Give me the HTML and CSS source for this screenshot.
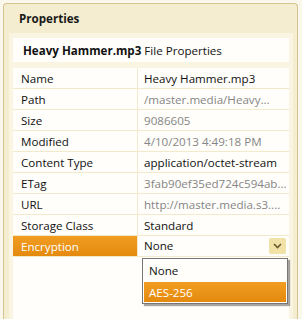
FILE: index.html
```html
<!DOCTYPE html>
<html lang="en">
<head>
    <meta charset="UTF-8">
    <title>Properties</title>
    <link rel="stylesheet" href="styles.css">
</head>
<body>
    <div class="panel">
        <div class="panel-title">Properties</div>
        <div class="panel-body">
            <div class="file-title"><b>Heavy Hammer.mp3</b>&nbsp;File Properties</div>
            <div class="props">
                <div class="row"><div class="key">Name</div><div class="val">Heavy Hammer.mp3</div></div>
                <div class="row"><div class="key">Path</div><div class="val dim">/master.media/Heavy...</div></div>
                <div class="row"><div class="key">Size</div><div class="val dim">9086605</div></div>
                <div class="row"><div class="key">Modified</div><div class="val dim">4/10/2013 4:49:18 PM</div></div>
                <div class="row"><div class="key">Content Type</div><div class="val">application/octet-stream</div></div>
                <div class="row"><div class="key">ETag</div><div class="val dim">3fab90ef35ed724c594ab...</div></div>
                <div class="row"><div class="key">URL</div><div class="val dim">http://master.media.s3....</div></div>
                <div class="row"><div class="key">Storage Class</div><div class="val">Standard</div></div>
                <div class="row selected">
                    <div class="key">Encryption</div>
                    <div class="val select">
                        None
                        <span class="select-btn">
                            <svg width="9" height="6" viewBox="0 0 9 6"><path d="M1 1 L4.5 4.5 L8 1" fill="none" stroke="#6b5a2c" stroke-width="1.6"/></svg>
                        </span>
                    </div>
                </div>
                <div class="dropdown">
                    <div class="option">None</div>
                    <div class="option active">AES-256</div>
                </div>
            </div>
        </div>
    </div>
</body>
</html>
```

FILE: styles.css
```css
body {
    margin: 0;
    background-color: #faf7ec;
    font-family: "Segoe UI", "Open Sans", sans-serif;
    font-size: 11.6px;
    color: #111;
}

.panel {
    margin: 3px 4px 0 3px;
    height: 316px;
    box-sizing: border-box;
    border: 1px solid #d6c48e;
    border-bottom: none;
    border-radius: 4px 4px 0 0;
    background-color: #f5edcf;
    padding: 0 4px 0 5px;
    display: flex;
    flex-direction: column;
}

.panel-title {
    height: 29px;
    line-height: 30px;
    padding-left: 10px;
    font-weight: bold;
    color: #1a1a1a;
}

.panel-body {
    flex: 1;
    background-color: #faf5e3;
    padding: 5px 4px 0;
    display: flex;
    flex-direction: column;
}

.file-title {
    height: 24px;
    line-height: 25px;
    padding-left: 10px;
    background-color: #fffefb;
}

.props {
    flex: 1;
    margin-top: 6px;
    background-color: #fffefb;
    position: relative;
}

.row {
    display: flex;
    height: 20px;
    line-height: 22px;
    border-bottom: 1px solid #f3eacb;
}

.key {
    width: 125px;
    padding-left: 8px;
    box-sizing: border-box;
    border-right: 1px solid #f3eacb;
}

.val {
    flex: 1;
    padding-left: 6px;
    white-space: nowrap;
    overflow: hidden;
}

.dim {
    color: #858585;
}

.selected .key {
    background: linear-gradient(#f19d22, #e48a0e);
    color: white;
}

.select {
    display: flex;
    align-items: center;
    justify-content: space-between;
    padding-right: 3px;
}

.select-btn {
    width: 17px;
    height: 16px;
    background-color: #f1e2a8;
    border-radius: 2px;
    display: flex;
    align-items: center;
    justify-content: center;
}

.dropdown {
    position: absolute;
    left: 129px;
    top: 190px;
    width: 142px;
    padding: 1px;
    background-color: #fffefb;
    border: 1px solid #767676;
    box-shadow: 2px 2px 1px rgba(0, 0, 0, 0.35);
}

.option {
    height: 20px;
    line-height: 21px;
    padding-left: 5px;
}

.option.active {
    margin-top: 2px;
    background: linear-gradient(#f19d22, #e48a0e);
    color: white;
}
```
